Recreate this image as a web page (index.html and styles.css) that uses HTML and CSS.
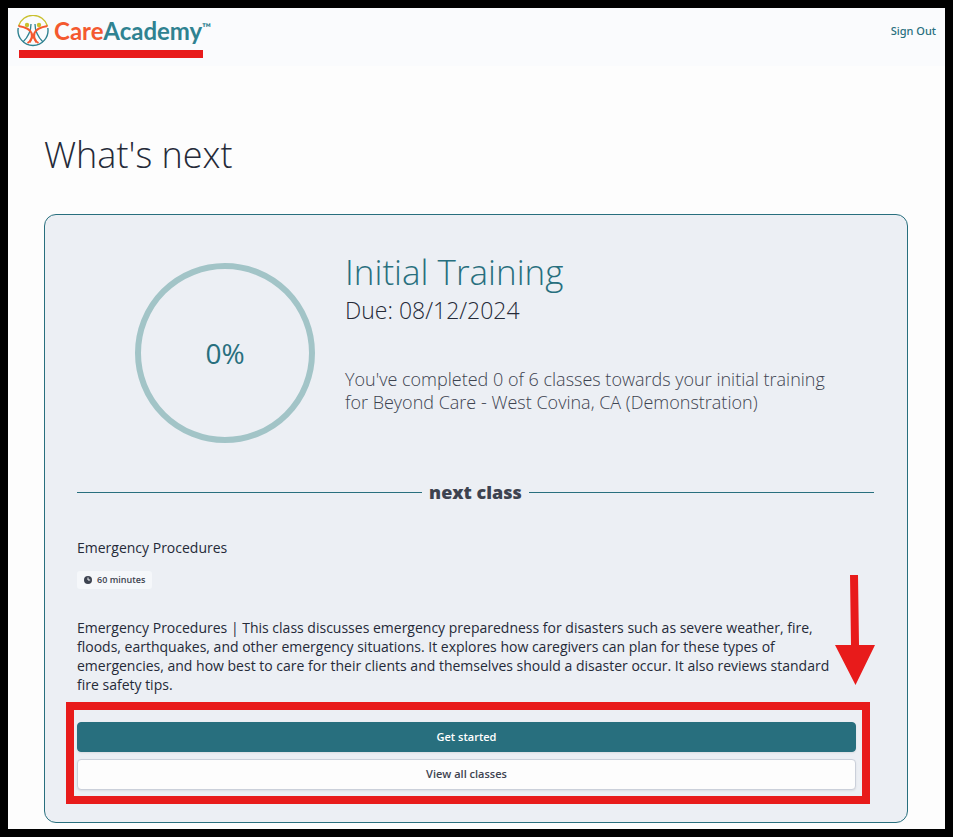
FILE: index.html
```
<!doctype html>
<html lang="en">
<head>
<meta charset="utf-8">
<title>CareAcademy – What's next</title>
<meta name="viewport" content="width=device-width, initial-scale=1">
<link rel="stylesheet" href="styles.css">
</head>
<body>
<div class="page">

<header class="topbar">
  <a class="logo" href="#" aria-label="CareAcademy">
    <svg class="logo-mark" viewBox="0 0 32 32" fill="none" aria-hidden="true">
      <path d="M1.500 11A15.200 15.200 0 0 1 30.500 11" stroke="#c9c02f" stroke-width="1.400"/>
      <path d="M1.200 13A15 15 0 1 0 30.800 13" stroke="#2f8291" stroke-width="1.400"/>
      <path d="M14 9C14 17 11 22 6 27M18 9C18 17 21 22 26 27" stroke="#2f8291" stroke-width="1.300"/>
      <path d="M1.500 11C8 12 13 14 14.500 18C15.500 22 14 26 10.500 28M30.500 11C24 12 19 14 17.500 18C16.500 22 18 26 21.500 28" stroke="#f4592f" stroke-width="2"/>
      <path d="M14.500 18L19 27.500M17.500 18L13 27.500" stroke="#f4592f" stroke-width="1.400"/>
      <circle cx="10" cy="10" r="2.200" fill="#c9c02f"/>
      <circle cx="22" cy="10" r="2.200" fill="#c9c02f"/>
    </svg>
    <span class="logo-text"><span class="care">Care</span>Academy<sup>™</sup></span>
    <span class="underline-mark"></span>
  </a>
  <a class="signout" href="#">Sign Out</a>
</header>

<main>
  <h1>What's next</h1>

  <section class="card">
    <div class="summary">
      <div class="ring">0%</div>
      <div class="training">
        <h2>Initial Training</h2>
        <p class="due">Due: 08/12/2024</p>
        <p class="progress">You've completed 0 of 6 classes towards your initial training<br>for Beyond Care - West Covina, CA (Demonstration)</p>
      </div>
    </div>

    <h3 class="divider">next class</h3>

    <div class="class-info">
      <h4>Emergency Procedures</h4>
      <span class="badge">
        <svg viewBox="0 0 10 10" aria-hidden="true">
          <circle cx="5" cy="5" r="4" fill="#3d4350"/>
          <path d="M5 2.500V5H7.200" fill="none" stroke="#f5f7fa"/>
        </svg>
        60 minutes
      </span>
      <p class="description">Emergency Procedures | This class discusses emergency preparedness for disasters such as severe weather, fire,<br>
      floods, earthquakes, and other emergency situations. It explores how caregivers can plan for these types of<br>
      emergencies, and how best to care for their clients and themselves should a disaster occur. It also reviews standard<br>
      fire safety tips.</p>
    </div>

    <div class="actions">
      <button class="btn primary" type="button">Get started</button>
      <button class="btn" type="button">View all classes</button>
      <div class="highlight"></div>
      <svg class="arrow" viewBox="0 0 40 110" aria-hidden="true">
        <path d="M15 0H23L24 70H40L20.500 110L0 70H16Z" fill="#e81b1b"/>
      </svg>
    </div>
  </section>
</main>

</div>
</body>
</html>
```
FILE: styles.css
```
:root{
  --c-teal:#286f7e;
  --c-text:#252a38;
  --c-sub:#3d4350;
  --c-card:#eceff4;
  --c-mark:#e81b1b;
}
*{box-sizing:border-box;margin:0;padding:0;}
body{
  background:#000;
  color:var(--c-text);
  font-family:"Open Sans","Noto Sans",sans-serif;
  font-weight:300;
  padding:8px;
}
.page{background:#fdfdfd;padding-bottom:6px;}

.topbar{
  display:flex;
  justify-content:space-between;
  align-items:flex-start;
  height:58px;
  padding:7px 9px;
  background:#fafbfd;
}
.logo{position:relative;display:flex;align-items:center;gap:5px;text-decoration:none;}
.logo-mark{width:32px;height:32px;}
.logo-text{font-family:Lato,sans-serif;font-size:24px;font-weight:700;line-height:32px;color:#2f8291;}
.logo-text .care{color:#f4592f;}
.logo-text sup{font-size:12px;line-height:1;vertical-align:8px;}
.underline-mark{position:absolute;left:2px;right:8px;top:35px;height:8px;background:var(--c-mark);}
.signout{font-family:"Noto Sans",sans-serif;font-size:11px;font-weight:500;line-height:32px;color:var(--c-teal);text-decoration:none;}

main{padding:64px 37px 0 36px;}
h1{font-size:36px;font-weight:300;line-height:50px;margin-bottom:34px;}
.card{
  padding:38px 33px 32px 32px;
  background:var(--c-card);
  border:1px solid var(--c-teal);
  border-radius:12px;
}

.summary{display:flex;gap:30px;padding-left:58px;}
.ring{
  flex:none;
  display:grid;
  place-items:center;
  width:180px;
  height:180px;
  margin-top:10px;
  border:6px solid #a2c4c7;
  border-radius:50%;
  color:var(--c-teal);
  font-size:28px;
  font-weight:400;
}
h2{font-size:35px;font-weight:300;line-height:38px;color:var(--c-teal);}
.due{font-size:23px;line-height:38px;}
.progress{margin-top:39px;font-size:18px;line-height:23px;color:var(--c-sub);}

.divider{
  display:flex;
  align-items:center;
  gap:7px;
  margin:38px 0 33px;
  font-size:18px;
  font-weight:800;
  line-height:23px;
  color:var(--c-sub);
}
.divider::before,.divider::after{content:"";flex:1;height:1px;background:var(--c-teal);}

h4{font-size:14px;font-weight:375;line-height:22px;}
.badge{
  display:inline-flex;
  align-items:center;
  gap:4px;
  margin-top:12px;
  padding:0 7px 0 6px;
  border-radius:3px;
  background:#f5f7fa;
  color:var(--c-sub);
  font-size:9px;
  font-weight:600;
  line-height:18px;
}
.badge svg{width:10px;height:10px;}
.description{margin-top:28px;font-size:14px;font-weight:375;line-height:19px;}

.actions{position:relative;display:grid;gap:7px;margin:28px 18px 0 0;}
.btn{
  height:31px;
  padding-bottom:2px;
  border:1px solid #cbd0da;
  border-radius:4px;
  background:#fdfdfd;
  box-shadow:0 1px 2px rgb(0 0 0 / .08);
  color:var(--c-sub);
  font-family:inherit;
  font-size:11px;
  font-weight:600;
  cursor:pointer;
}
.btn.primary{height:30px;border-color:var(--c-teal);background:var(--c-teal);color:#fff;}
/* callout frame and arrow over the buttons */
.highlight{position:absolute;inset:-20px -14px -14px -11px;border:8px solid var(--c-mark);pointer-events:none;}
.arrow{position:absolute;right:-19px;top:-147px;width:40px;height:110px;pointer-events:none;}
```
